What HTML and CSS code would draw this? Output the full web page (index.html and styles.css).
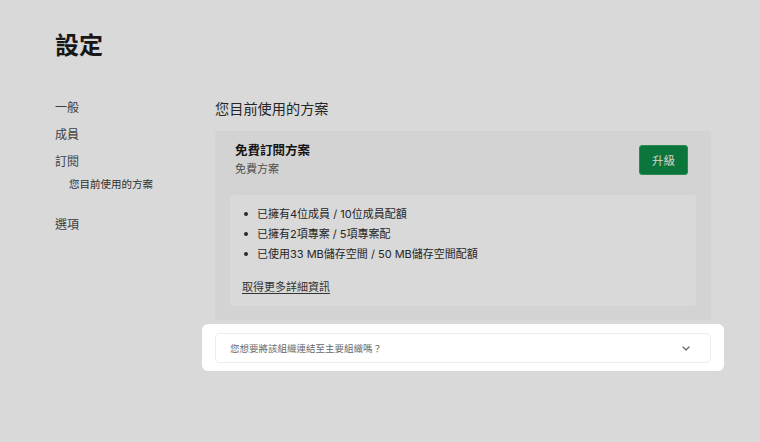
FILE: index.html
```html
<!DOCTYPE html>
<html lang="zh-Hant">
<head>
<meta charset="utf-8">
<title>設定</title>
<link rel="stylesheet" href="styles.css">
</head>
<body>
<div class="page">
  <h1 class="title">設定</h1>
  <div class="layout">
    <nav class="nav">
      <a class="nav-item">一般</a>
      <a class="nav-item">成員</a>
      <a class="nav-item">訂閱</a>
      <a class="nav-sub">您目前使用的方案</a>
      <a class="nav-item nav-gap">選項</a>
    </nav>
    <main class="main">
      <h2 class="section-title">您目前使用的方案</h2>
      <section class="plan-card">
        <div class="plan-head">
          <div class="plan-names">
            <div class="plan-name">免費訂閱方案</div>
            <div class="plan-sub">免費方案</div>
          </div>
          <button class="btn-upgrade">升級</button>
        </div>
        <div class="plan-detail">
          <ul class="quota-list">
            <li class="quota">已擁有4位成員 / 10位成員配額</li>
            <li class="quota">已擁有2項專案 / 5項專案配</li>
            <li class="quota">已使用33 MB儲存空間 / 50 MB儲存空間配額</li>
          </ul>
          <a class="more-link">取得更多詳細資訊</a>
        </div>
      </section>
      <section class="spotlight">
        <div class="accordion">
          <span class="accordion-text">您想要將該組織連結至主要組織嗎？</span>
          <svg class="chevron" width="8" height="5" viewBox="0 0 8 5"><path d="M1 1 L4 4 L7 1" fill="none" stroke="#666" stroke-width="1.2" stroke-linecap="round" stroke-linejoin="round"/></svg>
        </div>
      </section>
    </main>
  </div>
</div>
</body>
</html>
```

FILE: styles.css
```css
html, body {
  margin: 0;
  padding: 0;
}
body {
  width: 760px;
  height: 442px;
  background: #d9d9d9;
  font-family: "Inter", "Noto Sans CJK TC", sans-serif;
  color: #1c1c1c;
  overflow: hidden;
}
.page {
  padding: 30px 0 0 55px;
}
.title {
  margin: 0;
  font-size: 24px;
  line-height: 32px;
  font-weight: 700;
  color: #171717;
}
.layout {
  display: grid;
  grid-template-columns: 160px 496px;
  margin-top: 37px;
}
.nav {
  display: flex;
  flex-direction: column;
}
.nav-item {
  font-size: 12px;
  line-height: 18px;
  color: #404040;
  margin-bottom: 9px;
}
.nav-item:nth-child(3) {
  margin-bottom: 5px;
}
.nav-sub {
  font-size: 10.5px;
  line-height: 18px;
  color: #303030;
  padding-left: 14px;
  margin-bottom: 22px;
}
.main {
  display: flex;
  flex-direction: column;
}
.section-title {
  margin: 0;
  font-size: 14.2px;
  line-height: 20px;
  font-weight: 400;
  color: #262626;
}
.plan-card {
  margin-top: 12px;
  background: #d3d3d3;
  padding: 11px 0 14px;
}
.plan-head {
  display: flex;
  align-items: center;
  justify-content: space-between;
  padding: 0 23px 0 20px;
}
.plan-name {
  font-size: 12.5px;
  line-height: 18px;
  font-weight: 700;
  color: #141414;
}
.plan-sub {
  font-size: 11px;
  line-height: 18px;
  color: #505050;
}
.btn-upgrade {
  width: 49px;
  height: 30px;
  border: 1px solid #2a8a55;
  border-radius: 3px;
  background: #0b763b;
  color: #d4d4d4;
  font-family: inherit;
  font-size: 11.5px;
  padding: 0;
}
.plan-detail {
  margin: 17px 15px 0;
  background: #d9d9d9;
  border-radius: 4px;
  padding: 9px 12px 9px;
  display: flex;
  flex-direction: column;
  align-items: flex-start;
}
.quota-list {
  list-style: none;
  margin: 0;
  padding: 0;
}
.quota {
  display: flex;
  align-items: center;
  font-size: 11px;
  line-height: 20px;
  color: #262626;
  padding-left: 2px;
}
.quota::before {
  content: "";
  width: 4px;
  height: 4px;
  border-radius: 50%;
  background: #2a2a2a;
  margin-right: 9px;
  flex: none;
}
.more-link {
  margin-top: 13px;
  font-size: 11px;
  line-height: 20px;
  color: #333;
  text-decoration: underline;
  text-underline-offset: 2px;
}
.spotlight {
  margin: 4px -13px 0;
  background: #fff;
  border-radius: 6px;
  padding: 9px 13px 8px;
}
.accordion {
  height: 28px;
  border: 1px solid #ececec;
  border-radius: 4px;
  display: flex;
  align-items: center;
  justify-content: space-between;
  padding: 0 20px 0 14px;
}
.accordion-text {
  font-size: 9.5px;
  color: #6a6a6a;
}
.chevron {
  display: block;
}
```
